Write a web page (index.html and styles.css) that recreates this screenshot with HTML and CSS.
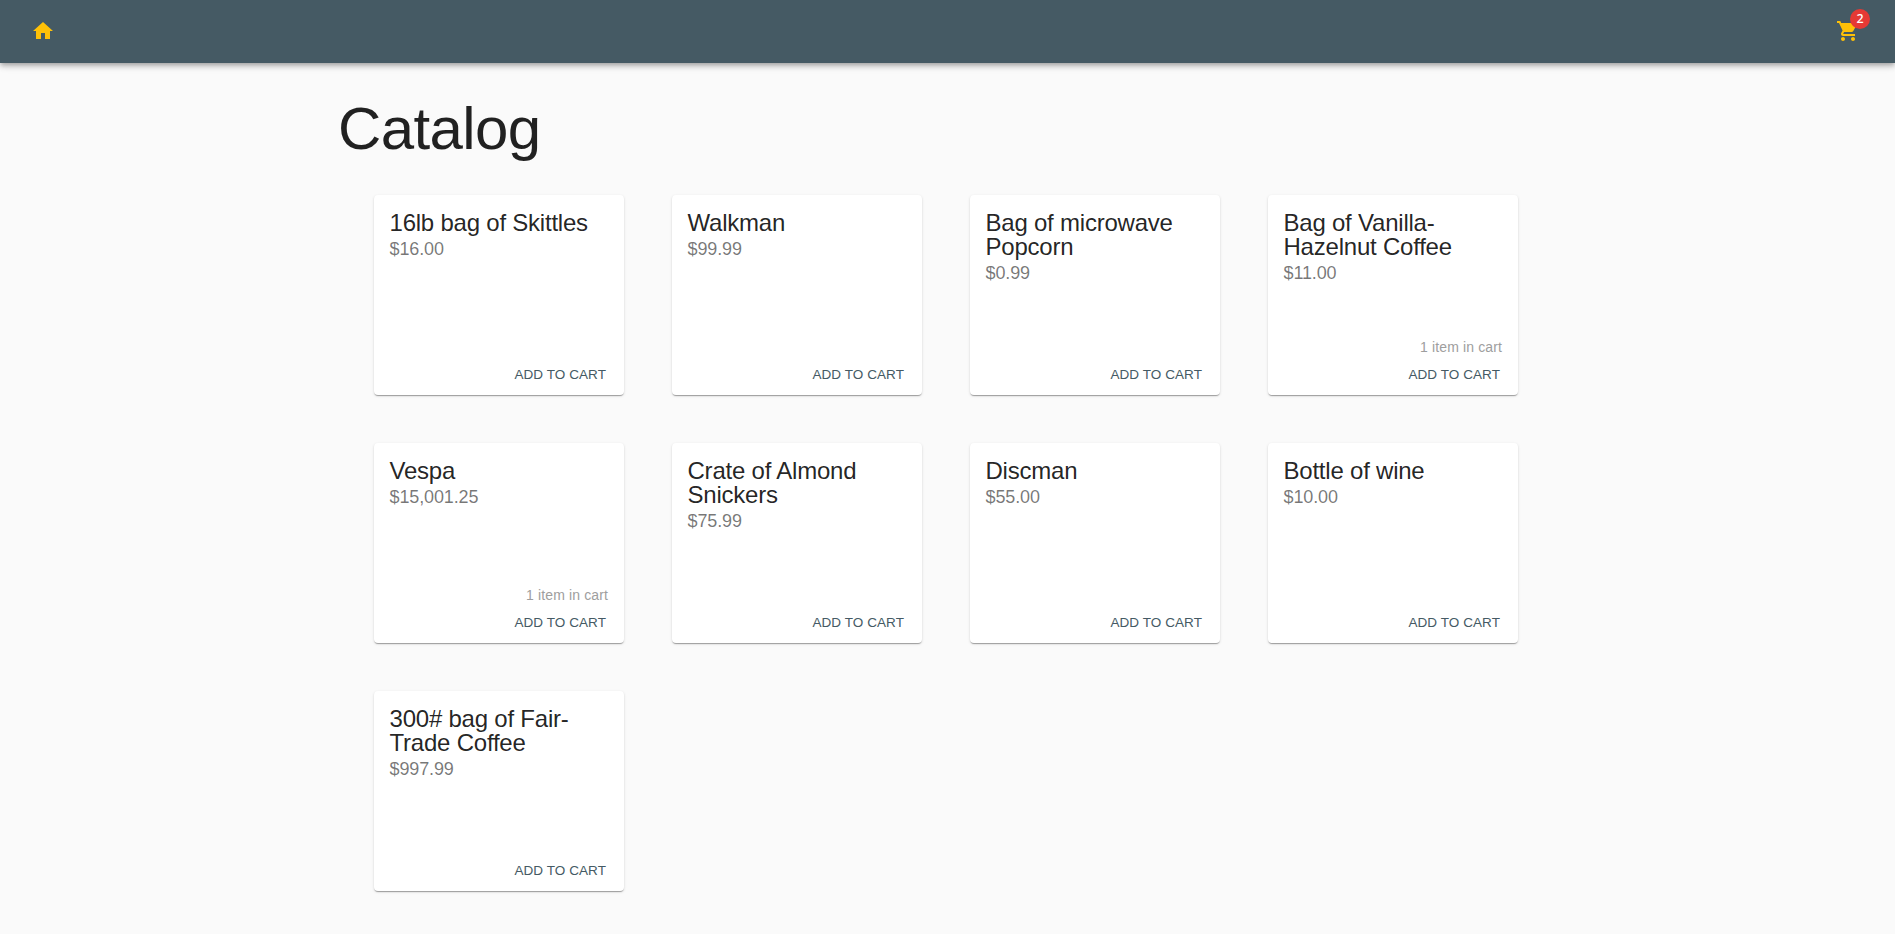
FILE: index.html
```html
<!DOCTYPE html>
<html lang="en"><head><meta charset="utf-8"><title>Catalog</title><link rel="stylesheet" href="styles.css"></head>
<body>
<header class="appbar">
<button class="icon-button" aria-label="Home"><svg class="icon" viewBox="0 0 24 24"><path d="M10 20v-6h4v6h5v-8h3L12 3 2 12h3v8z"/></svg></button>
<button class="icon-button" aria-label="Cart"><span class="badge-root"><svg class="icon" viewBox="0 0 24 24"><path d="M7 18c-1.100 0-1.990.9-1.990 2S5.900 22 7 22s2-.9 2-2-.9-2-2-2zM1 2v2h2l3.600 7.590-1.350 2.450c-.16.28-.25.61-.25.96 0 1.100.9 2 2 2h12v-2H7.420c-.14 0-.25-.11-.25-.25l.03-.12.9-1.630h7.450c.75 0 1.410-.41 1.750-1.030l3.580-6.490c.08-.14.12-.31.12-.48 0-.55-.45-1-1-1H5.210l-.94-2H1zm16 16c-1.100 0-1.990.9-1.990 2s.89 2 1.990 2 2-.9 2-2-.9-2-2-2z"/></svg><span class="badge">2</span></span></button>
</header>
<main class="catalog">
<h1 class="title">Catalog</h1>
<div class="grid">
<article class="card"><div class="content"><h2 class="name">16lb bag of Skittles</h2><p class="price">$16.00</p></div><div class="actions"><button class="add">Add to cart</button></div></article>
<article class="card"><div class="content"><h2 class="name">Walkman</h2><p class="price">$99.99</p></div><div class="actions"><button class="add">Add to cart</button></div></article>
<article class="card"><div class="content"><h2 class="name">Bag of microwave Popcorn</h2><p class="price">$0.99</p></div><div class="actions"><button class="add">Add to cart</button></div></article>
<article class="card"><div class="content"><h2 class="name">Bag of Vanilla-Hazelnut Coffee</h2><p class="price">$11.00</p></div><div class="actions"><span class="count">1 item in cart</span><button class="add">Add to cart</button></div></article>
<article class="card"><div class="content"><h2 class="name">Vespa</h2><p class="price">$15,001.25</p></div><div class="actions"><span class="count">1 item in cart</span><button class="add">Add to cart</button></div></article>
<article class="card"><div class="content"><h2 class="name">Crate of Almond Snickers</h2><p class="price">$75.99</p></div><div class="actions"><button class="add">Add to cart</button></div></article>
<article class="card"><div class="content"><h2 class="name">Discman</h2><p class="price">$55.00</p></div><div class="actions"><button class="add">Add to cart</button></div></article>
<article class="card"><div class="content"><h2 class="name">Bottle of wine</h2><p class="price">$10.00</p></div><div class="actions"><button class="add">Add to cart</button></div></article>
<article class="card"><div class="content"><h2 class="name">300# bag of Fair-Trade Coffee</h2><p class="price">$997.99</p></div><div class="actions"><button class="add">Add to cart</button></div></article>
</div>
</main>
</body></html>
```

FILE: styles.css
```css
* { box-sizing: border-box; }
body { margin: 0; min-height: 934px; background: #fafafa; color: rgba(0,0,0,.87); font-family: "Liberation Sans", Arial, sans-serif; }
h1, h2, p { margin: 0; font-weight: 400; }
button { border: 0; background: none; font: inherit; }
.appbar { display: flex; justify-content: space-between; align-items: center; height: 63px; padding: 0 23px 1px 19px; background: #455a64; box-shadow: 0 2px 4px -1px rgba(0,0,0,.2), 0 4px 5px rgba(0,0,0,.14), 0 1px 10px rgba(0,0,0,.12); }
.icon-button { display: flex; padding: 12px; color: #ffc107; }
.badge-root { position: relative; display: flex; }
.icon { display: block; width: 24px; height: 24px; fill: currentColor; }
.badge { position: absolute; top: -10px; right: -10px; display: flex; align-items: center; justify-content: center; width: 20px; height: 20px; border-radius: 10px; background: #e53935; color: #fff; font-family: "Noto Sans", sans-serif; font-size: 12.5px; font-weight: 500; line-height: 1; }
.catalog { width: 1219px; margin: 0 auto; padding-top: 30px; }
.title { font-size: 60px; line-height: 72px; letter-spacing: -.6px; }
.grid { display: grid; grid-template-columns: repeat(4, 250px); gap: 48px; padding: 30px 36px 0; }
.card { display: flex; flex-direction: column; justify-content: space-between; height: 200px; border-radius: 4px; background: #fff; box-shadow: 0 2px 1px -1px rgba(0,0,0,.2), 0 1px 1px rgba(0,0,0,.14), 0 1px 3px rgba(0,0,0,.12); }
.content { padding: 16px 16px 16px 15.5px; }
.name { font-size: 24px; line-height: 24px; letter-spacing: -.22px; }
.price { color: rgba(0,0,0,.54); font-size: 18px; line-height: 28px; letter-spacing: -.12px; }
.actions { display: flex; flex-direction: column; align-items: flex-end; padding: 0 12px 4px; }
.count { padding-right: 4px; color: #9e9e9e; font-size: 14px; line-height: 20px; letter-spacing: .13px; margin-bottom: 2px; }
.add { padding: 6px; color: #455a64; font-size: 13.5px; line-height: 20px; letter-spacing: .07px; text-transform: uppercase; }
```
